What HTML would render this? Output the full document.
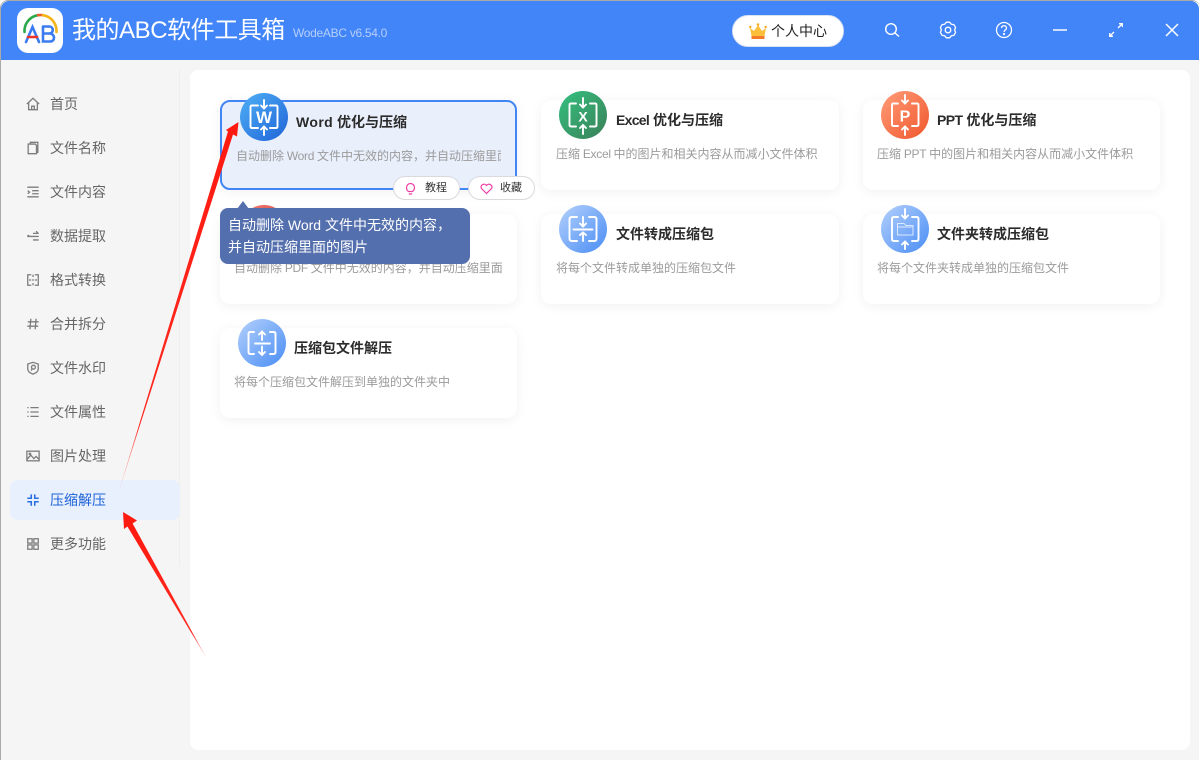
<!DOCTYPE html>
<html lang="zh"><head><meta charset="utf-8"><title>我的ABC软件工具箱</title>
<style>
*{box-sizing:border-box;margin:0;padding:0}
html,body{width:1200px;height:760px;overflow:hidden;background:#fff}
body{font-family:"Liberation Sans","Noto Sans CJK SC",sans-serif;position:relative}
.abs{position:absolute}
#win{position:absolute;left:1px;top:1px;width:1198px;height:759px;background:#f5f5f5;border-radius:8px 8px 0 0;overflow:hidden}
#edge{position:absolute;left:0;top:0;width:1200px;height:760px;border-top:1px solid #aaa;border-left:1px solid #aaa;border-radius:8px 8px 0 0;pointer-events:none}
#head{position:absolute;left:1px;top:1px;width:1198px;height:59px;background:#4285f9;border-radius:8px 8px 0 0}
#logo{position:absolute;left:17px;top:8px;width:46px;height:45px;background:#fff;border-radius:11px}
#ttl{position:absolute;left:72px;top:14px;font-size:24px;line-height:34px;color:#fff;white-space:nowrap;letter-spacing:-.45px}
#ver{position:absolute;left:293px;top:25px;font-size:12px;line-height:16px;color:#b6cffb;white-space:nowrap;letter-spacing:-.3px}
#vip{position:absolute;left:732px;top:15px;width:112px;height:32px;border-radius:16px;background:#fff;border:1px solid #d8e2f2;font-size:14px;line-height:30px;color:#222;padding-left:38px;white-space:nowrap}
#main{position:absolute;left:190px;top:70px;width:1000px;height:680px;background:#fff;border-radius:8px}
#div{position:absolute;left:179px;top:70px;width:1px;height:496px;background:#eee}
#act{position:absolute;left:10px;top:480px;width:170px;height:40px;background:#e8f0fd;border-radius:8px}
.nav{position:absolute;left:50px;font-size:14px;line-height:20px;color:#666;white-space:nowrap}
.nav.on{color:#1d62d8}
.ni{position:absolute;left:26px;width:14px;height:14px;margin-top:1px;fill:none;stroke:#7d7d7d;stroke-width:1.500}
.card{position:absolute;width:298px;height:90px;background:#fff;border-radius:10px;box-shadow:0 2px 12px rgba(0,0,0,.06)}
.t{position:absolute;font-size:14px;font-weight:700;line-height:18px;color:#2b2b2b;white-space:nowrap}
.d{position:absolute;font-size:12px;line-height:16px;color:#9b9b9b;white-space:nowrap;overflow:hidden}
.l{word-spacing:-.5px}
.x{letter-spacing:-.3px}
.ic{position:absolute;width:48px;height:48px}
.pill{position:absolute;top:176px;width:67px;height:24px;background:#fff;border:1px solid #d9d9de;border-radius:12px;font-size:11px;line-height:22px;color:#333;padding-left:31px}
#tip{position:absolute;left:220px;top:208px;width:250px;height:56px;background:#546fad;border-radius:8px;color:#fff;font-size:14px;line-height:22px;padding:6px 8px;white-space:nowrap}
</style></head><body>
<div id="win"></div>
<div id="head"></div>
<div id="logo"><svg width="46" height="45" viewBox="0 0 46 45" fill="none" stroke-linecap="round"><path d="M7.500 24A16 16 0 0 1 21 7.200" stroke="#2aa84a" stroke-width="2.600"/><path d="M21 7.200A16 16 0 0 1 26 7.200" stroke="#e8612a" stroke-width="2.600"/><path d="M26 7.200A16 16 0 0 1 39.500 24" stroke="#f4b41a" stroke-width="2.600"/><path d="M9 34L15.500 19L22 34" stroke="#3a7cf0" stroke-width="2.600"/><path d="M11 29H20" stroke="#e8342a" stroke-width="2.600"/><path d="M26 18.500H32C37 18.500 37 25.500 32 25.500H26V18.500M26 25.500V33.500H33C38.500 33.500 38.500 25.500 32 25.500" stroke="#3a7cf0" stroke-width="2.600"/></svg></div>
<div id="ttl">我的ABC软件工具箱</div>
<div id="ver">WodeABC v6.54.0</div>
<div id="vip">个人中心</div>
<svg class="abs" style="left:749px;top:23px" width="18" height="17" viewBox="0 0 18 17"><path d="M1 5L5 8L9 2L13 8L17 5L15.500 13H2.500Z" fill="#fbbf3c"/><circle cx="1.300" cy="4" r="1.200" fill="#f9a825"/><circle cx="9" cy="1.500" r="1.300" fill="#f9a825"/><circle cx="16.700" cy="4" r="1.200" fill="#f9a825"/><rect x="2.500" y="13" width="13" height="3" fill="#f47a2c"/></svg>
<svg class="abs" style="left:880px;top:20px" width="24" height="22" viewBox="0 0 24 22" fill="none" stroke="#fff" stroke-width="1.400"><circle cx="11" cy="9" r="5.300"/><path d="M15 13L19 16.500"/></svg>
<svg class="abs" style="left:936px;top:18px" width="24" height="24" viewBox="0 0 24 24" fill="none" stroke="#fff" stroke-width="1.300"><path d="M10.340 4.180L13.660 4.180L15.300 6.280L17.940 6.650L19.610 9.530L18.600 12L19.610 14.470L17.940 17.350L15.300 17.720L13.660 19.820L10.340 19.820L8.700 17.720L6.060 17.350L4.390 14.470L5.400 12L4.390 9.530L6.060 6.650L8.700 6.280Z" stroke-linejoin="round"/><circle cx="12" cy="12" r="2.800"/></svg>
<svg class="abs" style="left:992px;top:18px" width="24" height="24" viewBox="0 0 24 24" fill="none" stroke="#fff" stroke-width="1.300"><circle cx="12" cy="12" r="7.500"/><path d="M9.500 10C9.500 7 14.500 7 14.500 10C14.500 12 12 12 12 14"/><circle cx="12" cy="16" r=".5"/></svg>
<svg class="abs" style="left:1050px;top:20px" width="20" height="20" viewBox="0 0 20 20" fill="none" stroke="#e6eefc" stroke-width="1.700"><path d="M3 10H17"/></svg>
<svg class="abs" style="left:1106px;top:20px" width="20" height="20" viewBox="0 0 20 20" fill="none" stroke="#fff" stroke-width="1.300"><path d="M12 8L16 4M13 3.700H16.300V7M8 12L4 16M7 16.300H3.700V13"/></svg>
<svg class="abs" style="left:1162px;top:20px" width="20" height="20" viewBox="0 0 20 20" fill="none" stroke="#fff" stroke-width="1.500"><path d="M4 4L16 16M16 4L4 16"/></svg>

<div id="main"></div>
<div id="div"></div>
<div id="act"></div>

<svg class="ni" style="top:96px" viewBox="0 0 16 16"><path d="M1 8L8 1.500L15 8M3 6.500V14.500H13V6.500M6.500 14.500V10.500H9.500V14.500"/></svg>
<div class="nav" style="top:94px">首页</div>
<svg class="ni" style="top:140px" viewBox="0 0 16 16"><path d="M5 3V1.500H13.500V13H12M2.500 3.500H10.500L12 5V14.500H2.500Z"/></svg>
<div class="nav" style="top:138px">文件名称</div>
<svg class="ni" style="top:184px" viewBox="0 0 16 16"><path d="M1.500 2.500H14.500M7 6.500H14.500M7 10H14.500M1.500 13.500H14.500M2 6.500L4 8.200L2 10" /></svg>
<div class="nav" style="top:182px">文件内容</div>
<svg class="ni" style="top:228px" viewBox="0 0 16 16"><path d="M8 5H14.500M14 5L11.500 2.500M1.500 8.500H14.500M1.500 8.500L3.500 6.800M8 12.500H14.500"/></svg>
<div class="nav" style="top:226px">数据提取</div>
<svg class="ni" style="top:272px" viewBox="0 0 16 16"><path d="M6 2H2V14H6M10 2H14V14H10M8 2V4.500M8 7V9M8 11.500V14M3.500 8H6M10 8H12.500"/></svg>
<div class="nav" style="top:270px">格式转换</div>
<svg class="ni" style="top:316px" viewBox="0 0 16 16"><path d="M5.500 2L4.500 14M11.500 2L10.500 14M2 5.500H14.500M1.500 10.500H14"/></svg>
<div class="nav" style="top:314px">合并拆分</div>
<svg class="ni" style="top:360px" viewBox="0 0 16 16"><path d="M8 1.500L14 3.500V9C14 12 11 14 8 15C5 14 2 12 2 9V3.500Z"/><circle cx="8.500" cy="7" r="2.200"/><path d="M6 11L7 8.500"/></svg>
<div class="nav" style="top:358px">文件水印</div>
<svg class="ni" style="top:404px" viewBox="0 0 16 16"><path d="M5 3H14.500M5 8H14.500M5 13H14.500M1.500 3H3M1.500 8H3M1.500 13H3"/></svg>
<div class="nav" style="top:402px">文件属性</div>
<svg class="ni" style="top:448px" viewBox="0 0 16 16"><rect x="1" y="2.500" width="14" height="11"/><path d="M1 12L5.500 7L9 11L11.500 8.500L15 12"/><circle cx="4.500" cy="5.500" r=".8"/></svg>
<div class="nav" style="top:446px">图片处理</div>
<svg class="ni" style="top:492px;stroke:#2a6fe0;stroke-width:1.800" viewBox="0 0 16 16"><path d="M6 1.500V6H1.500M10 1.500V6H14.500M6 14.500V10H1.500M10 14.500V10H14.500"/></svg>
<div class="nav on" style="top:490px">压缩解压</div>
<svg class="ni" style="top:536px" viewBox="0 0 16 16"><rect x="2" y="2" width="5" height="5"/><rect x="9" y="2" width="5" height="5"/><rect x="2" y="9" width="5" height="5"/><rect x="9" y="9" width="5" height="5"/></svg>
<div class="nav" style="top:534px">更多功能</div>

<svg width="0" height="0" style="position:absolute"><defs>
<linearGradient id="gb" x1="0" y1="0" x2="1" y2="1"><stop offset="0" stop-color="#4fb0f5"/><stop offset="1" stop-color="#1f63d8"/></linearGradient>
<linearGradient id="gg" x1="0" y1="0" x2="1" y2="1"><stop offset="0" stop-color="#35c07f"/><stop offset="1" stop-color="#3a8058"/></linearGradient>
<linearGradient id="go" x1="0" y1="0" x2="1" y2="1"><stop offset="0" stop-color="#ff9d78"/><stop offset="1" stop-color="#f0562c"/></linearGradient>
<linearGradient id="gl" x1="0" y1="0" x2="1" y2="1"><stop offset="0" stop-color="#b3d0fb"/><stop offset="1" stop-color="#4a8df5"/></linearGradient>
<linearGradient id="gr" x1="0" y1="0" x2="1" y2="1"><stop offset="0" stop-color="#f07a6e"/><stop offset="1" stop-color="#cf3f38"/></linearGradient>
</defs></svg>

<div class="card" style="left:220px;top:100px;width:297px;background:#e9effb;border:2px solid #4285f4"></div>
<div class="card" style="left:541px;top:100px"></div>
<div class="card" style="left:863px;top:100px;width:297px"></div>
<div class="card" style="left:220px;top:214px;width:297px"></div>
<div class="card" style="left:541px;top:214px"></div>
<div class="card" style="left:863px;top:214px;width:297px"></div>
<div class="card" style="left:220px;top:328px;width:297px"></div>

<svg class="ic" style="left:240px;top:93px" viewBox="0 0 48 48" fill="none" stroke="#fff" stroke-width="1.900" stroke-linecap="round"><circle cx="24" cy="24" r="24" fill="url(#gb)" stroke="none"/><path d="M18 12.500H12Q10.500 12.500 10.500 14V33.500Q10.500 35 12 35H18M30 12.500H36Q37.500 12.500 37.500 14V33.500Q37.500 35 36 35H30M24 7V15M21 12.500L24 15.500L27 12.500M24 42V34M21 36.500L24 33.500L27 36.500"/><text x="24" y="30" text-anchor="middle" font-size="17" font-weight="700" fill="#fff" stroke="none" font-family="Liberation Sans">W</text></svg>
<svg class="ic" style="left:559px;top:91px" viewBox="0 0 48 48" fill="none" stroke="#fff" stroke-width="1.900" stroke-linecap="round"><circle cx="24" cy="24" r="24" fill="url(#gg)" stroke="none"/><path d="M17 12.500H12Q10.500 12.500 10.500 14V34Q10.500 35.500 12 35.500H17M31 12.500H36Q37.500 12.500 37.500 14V34Q37.500 35.500 36 35.500H31M24 7V16M21 13.500L24 16.500L27 13.500M24 43V35M21 37L24 34L27 37"/><text x="24" y="30.500" text-anchor="middle" font-size="14" font-weight="700" fill="#fff" stroke="none" font-family="Liberation Sans">X</text></svg>
<svg class="ic" style="left:881px;top:91px" viewBox="0 0 48 48" fill="none" stroke="#fff" stroke-width="1.900" stroke-linecap="round"><circle cx="24" cy="24" r="24" fill="url(#go)" stroke="none"/><path d="M17 12.500H12.500Q11 12.500 11 14V33.500Q11 35 12.500 35H17M31 12.500H36Q37.500 12.500 37.500 14V33.500Q37.500 35 36 35H31M24 4V12M21 9.500L24 12.500L27 9.500M24 44V36M21 38.500L24 35.500L27 38.500"/><text x="24" y="30.500" text-anchor="middle" font-size="16" font-weight="700" fill="#fff" stroke="none" font-family="Liberation Sans">P</text></svg>
<svg class="ic" style="left:559px;top:205px" viewBox="0 0 48 48" fill="none" stroke="#fff" stroke-width="1.900" stroke-linecap="round"><circle cx="24" cy="24" r="24" fill="url(#gl)" stroke="none"/><path d="M18 12H13Q10.500 12 10.500 14.500V33.500Q10.500 36 13 36H18M30 12H35Q37.500 12 37.500 14.500V33.500Q37.500 36 35 36H30M24 12V21M21 18.500L24 21.500L27 18.500M14.500 24.500H33.500M24 36V27.500M21 30L24 27.500L27 30"/></svg>
<svg class="ic" style="left:881px;top:205px" viewBox="0 0 48 48" fill="none" stroke="#fff" stroke-width="1.900" stroke-linecap="round"><circle cx="24" cy="24" r="24" fill="url(#gl)" stroke="none"/><path d="M17 12H13Q11 12 11 14V34Q11 36 13 36H17M31 12H35.500Q37.500 12 37.500 14V34Q37.500 36 35.500 36H31M24 4V13M21 10.500L24 13.500L27 10.500M24 44V37M21 39.500L24 36.500L27 39.500"/><path d="M16.500 18.500H23L25 20.500H32V30H16.500ZM16.500 22H32" stroke-width="1" stroke="#dbe8ff"/></svg>
<svg class="ic" style="left:238px;top:319px" viewBox="0 0 48 48" fill="none" stroke="#fff" stroke-width="1.900" stroke-linecap="round"><circle cx="24" cy="24" r="24" fill="url(#gl)" stroke="none"/><path d="M16 13H12.500Q10.500 13 10.500 15V33Q10.500 35 12.500 35H16M32 13H35.500Q37.500 13 37.500 15V33Q37.500 35 35.500 35H32M24 21V12.500M21 15.500L24 12.500L27 15.500M17 24.500H32M24 27.500V36M21 33L24 36L27 33"/></svg>

<div class="t" style="left:296px;top:113px"><span style="letter-spacing:.4px">Word</span> 优化与压缩</div>
<div class="d l" style="left:236px;top:148px;width:265px">自动删除 <span class="x">Word</span> 文件中无效的内容，并自动压缩里面的图片</div>
<div class="t" style="left:616px;top:111px"><span style="letter-spacing:-.7px">Excel</span> 优化与压缩</div>
<div class="d l" style="left:556px;top:146px">压缩 <span class="x">Excel</span> 中的图片和相关内容从而减小文件体积</div>
<div class="t" style="left:937px;top:111px"><span style="letter-spacing:-.6px">PPT</span> 优化与压缩</div>
<div class="d l" style="left:877px;top:146px">压缩 <span class="x">PPT</span> 中的图片和相关内容从而减小文件体积</div>
<div class="d l" style="left:234px;top:260px;width:269px">自动删除 <span class="x">PDF</span> 文件中无效的内容，并自动压缩里面的图片</div>
<div class="t" style="left:616px;top:225px">文件转成压缩包</div>
<div class="d" style="left:556px;top:260px">将每个文件转成单独的压缩包文件</div>
<div class="t" style="left:937px;top:225px">文件夹转成压缩包</div>
<div class="d" style="left:877px;top:260px">将每个文件夹转成单独的压缩包文件</div>
<div class="t" style="left:294px;top:339px">压缩包文件解压</div>
<div class="d" style="left:234px;top:374px">将每个压缩包文件解压到单独的文件夹中</div>

<svg class="ic" style="left:240px;top:205px" viewBox="0 0 48 48"><circle cx="24" cy="24" r="24" fill="url(#gr)"/></svg>
<div class="abs" style="left:237px;top:201px;width:12px;height:8px;background:#546fad;clip-path:polygon(50% 0,100% 100%,0 100%)"></div>
<div id="tip">自动删除 Word 文件中无效的内容，<br>并自动压缩里面的图片</div>

<div class="pill" style="left:393px">教程</div>
<svg class="abs" style="left:403px;top:181px" width="15" height="15" viewBox="0 0 15 15" fill="none" stroke="#ef3fa4" stroke-width="1.200"><path d="M5.500 10.500C4 9.500 3.500 8 3.500 6.500A4 4 0 0 1 11.500 6.500C11.500 8 11 9.500 9.500 10.500ZM5.800 13H9.200"/></svg>
<div class="pill" style="left:468px">收藏</div>
<svg class="abs" style="left:479px;top:181px" width="15" height="15" viewBox="0 0 15 15" fill="none" stroke="#ef3fa4" stroke-width="1.200"><path d="M7.500 12.500L2.500 7.500C0.500 4.500 5 1.500 7.500 4.500C10 1.500 14.500 4.500 12.500 7.500Z"/></svg>

<svg class="abs" style="left:0;top:0" width="1200" height="760" viewBox="0 0 1200 760">
<defs>
<linearGradient id="a1" gradientUnits="userSpaceOnUse" x1="118" y1="494" x2="232" y2="134"><stop offset="0" stop-color="#ff2a20" stop-opacity=".15"/><stop offset=".2" stop-color="#ff2a20"/><stop offset="1" stop-color="#ff1a10"/></linearGradient>
<linearGradient id="a2" gradientUnits="userSpaceOnUse" x1="207" y1="659" x2="130" y2="525"><stop offset="0" stop-color="#ff2a20" stop-opacity=".2"/><stop offset=".2" stop-color="#ff2a20"/><stop offset="1" stop-color="#ff1a10"/></linearGradient>
</defs>
<polygon points="118,494 228,131.500 226,130 238.500,122 237,136.500 233,134.500" fill="url(#a1)"/>
<polygon points="207,659 127.400,526.500 124,529 123,512 137,520.500 132.600,523.500" fill="url(#a2)"/>
</svg>
<div id="edge"></div>
</body></html>
